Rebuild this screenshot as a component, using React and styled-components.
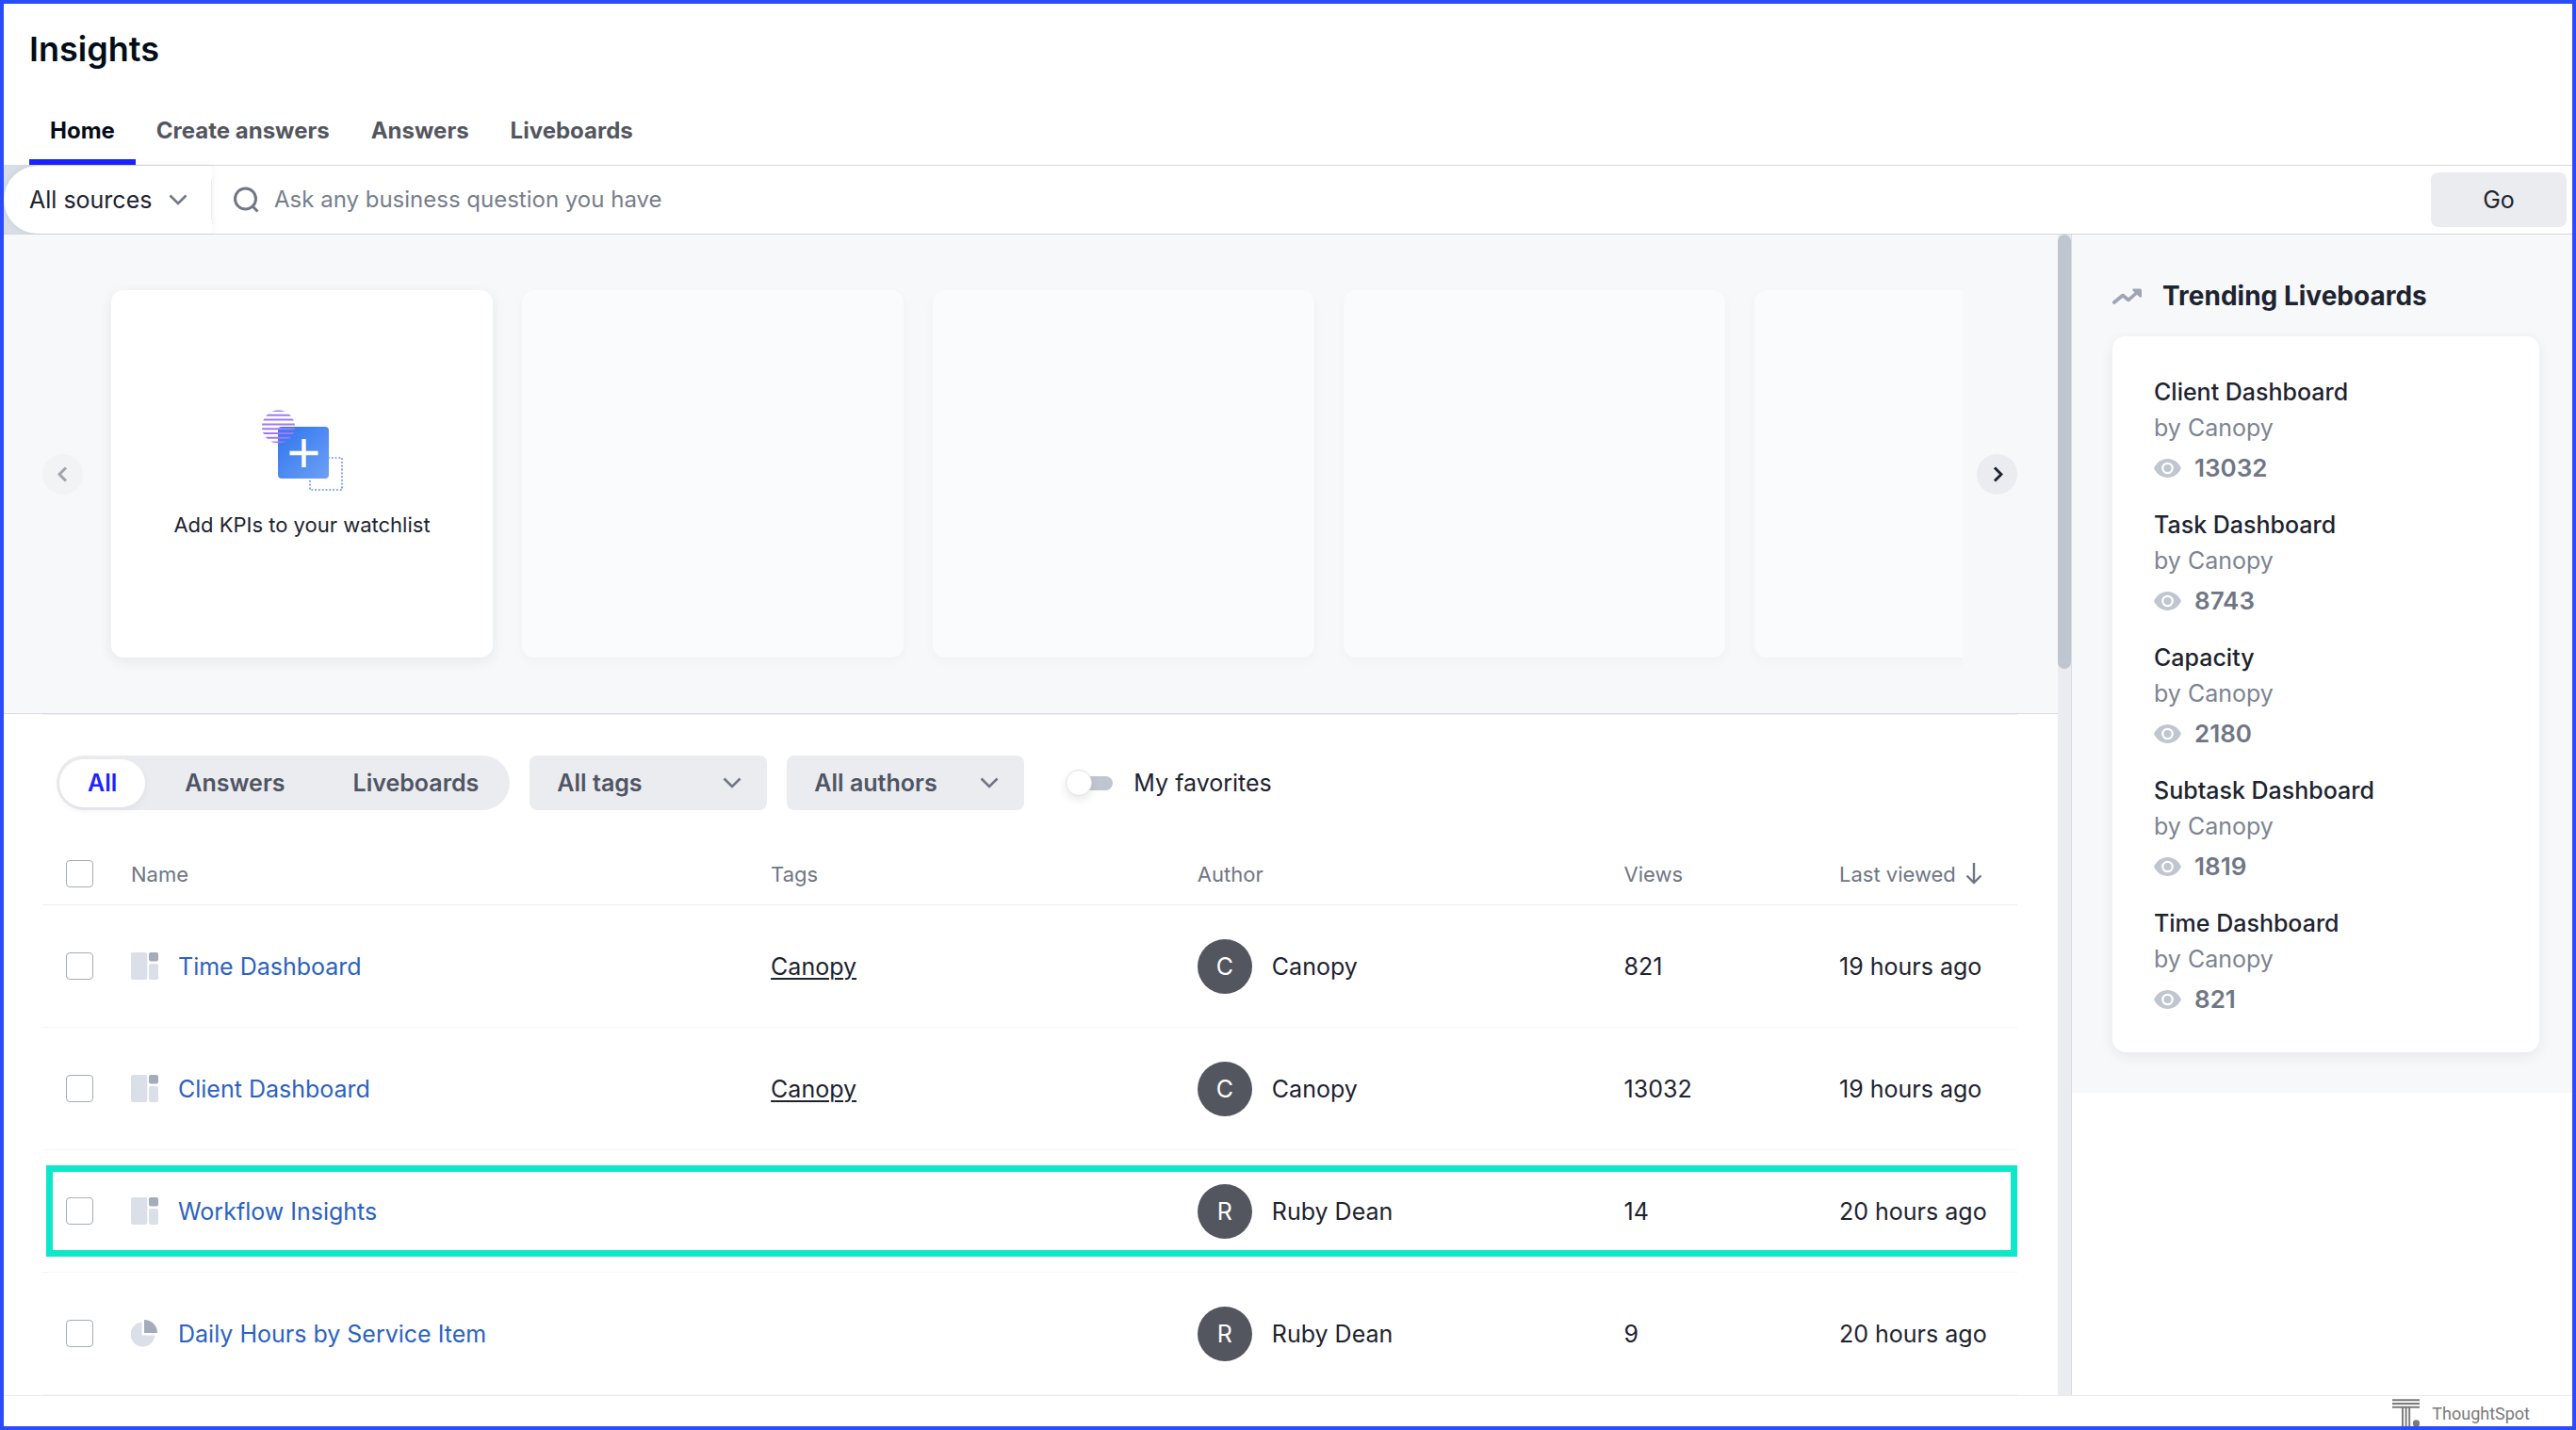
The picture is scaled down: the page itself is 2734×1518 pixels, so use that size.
import React from 'react';
import styled, { createGlobalStyle } from 'styled-components';

const GlobalStyle = createGlobalStyle`
  *, *::before, *::after { box-sizing: border-box; }
  body {
    margin: 0;
    background: #fff;
    color: #1d232f;
    font-family: Inter, "Liberation Sans", sans-serif;
    font-size: 25px;
    line-height: 38px;
  }
  button, input, select { font: inherit; color: inherit; }
  h1, h2, h3, p, ul { margin: 0; padding: 0; }
  ul { list-style: none; }
  a { color: inherit; text-decoration: none; }
`;

const Frame = styled.div`
  display: flex;
  flex-direction: column;
  min-height: 100vh;
  border: 4px solid #2b4bff;
`;

const Header = styled.header`
  border-bottom: 1px solid #d8dade;
`;

const Title = styled.h1`
  padding: 26px 27px 0;
  font-size: 36px;
  line-height: 44px;
  font-weight: 600;
  color: #030d18;
`;

const Tabs = styled.nav`
  display: flex;
  padding: 36px 27px 0;
`;

const Tab = styled.a`
  padding: 13px 22px 14px;
  border-bottom: 6px solid ${(p) => (p.$active ? '#1c23ff' : 'transparent')};
  color: ${(p) => (p.$active ? '#030d18' : '#53565e')};
  font-size: 24px;
  line-height: 32px;
  font-weight: 700;
`;

const SearchBar = styled.form`
  display: flex;
  align-items: center;
  height: 73px;
  border-bottom: 1px solid #d3d6dc;
`;

const SourceWell = styled.div`
  align-self: stretch;
  background: #d9dde6;
`;

const SourcePill = styled.div`
  height: 100%;
  border-radius: 36px 0 0 36px;
  background: #fff;
  box-shadow: 0 0 6px rgba(29, 35, 47, 0.08);
  display: flex;
  align-items: center;
`;

const SelectBox = styled.div`
  display: grid;
  align-items: center;
  width: ${(p) => p.$width};
  height: ${(p) => (p.$filled ? 58 : 44)}px;
  border-radius: ${(p) => (p.$filled ? 8 : 0)}px;
  background: ${(p) => (p.$filled ? '#ebecf0' : 'transparent')};
  color: ${(p) => (p.$filled ? '#4f5563' : '#1d232f')};
  font-weight: ${(p) => (p.$filled ? 600 : 400)};
  border-right: ${(p) => (p.$filled ? 0 : '1px solid #ebecf0')};

  > * { grid-area: 1 / 1; }
  > svg { justify-self: end; margin-right: ${(p) => (p.$filled ? 27 : 25)}px; pointer-events: none; }
`;

const Select = styled.select`
  appearance: none;
  width: 100%;
  height: 100%;
  border: 0;
  padding: 0 27px 0 ${(p) => p.$indent};
  background: transparent;
  cursor: pointer;
`;

const SearchLabel = styled.label`
  display: flex;
  flex: 1;
  align-items: center;
  gap: 16px;
  padding: 0 22px;
`;

const SearchInput = styled.input`
  flex: 1;
  border: 0;
  padding: 0;
  outline: 0;
  background: transparent;
  font-size: 24px;
  &::placeholder { color: #777e8b; opacity: 1; }
`;

const GoButton = styled.button`
  width: 144px;
  height: 58px;
  margin-right: 6px;
  border: 0;
  border-radius: 8px;
  background: #ebecf0;
`;

const Body = styled.div`
  display: flex;
  flex: 1;
`;

const Main = styled.main`
  flex: 1;
  min-width: 0;
`;

const ScrollTrack = styled.div`
  width: 15px;
  flex: none;
  border-right: 1px solid #d9dbe3;
  background: #ebecf0;
`;

const ScrollThumb = styled.div`
  height: 37.4%;
  border-radius: 7px;
  background: #c0c6d0;
`;

const Watchlist = styled.section`
  display: flex;
  align-items: center;
  padding: 45px 43px 45px 41px;
  border-bottom: 1px solid #d8dce3;
  background: #f7f8fa;
`;

const RoundButton = styled.button`
  display: flex;
  flex: none;
  align-items: center;
  justify-content: center;
  width: 43px;
  height: 43px;
  padding: 0;
  border: 0;
  border-radius: 50%;
  background: #ebecf0;
  color: #1d232f;
  &:disabled { background: #f2f3f5; color: #a0a3aa; }
`;

const Track = styled.div`
  display: flex;
  flex: 1;
  min-width: 0;
  gap: 31px;
  overflow: hidden;
  margin-right: 15px;
  padding: 14px 0 14px 30px;
`;

const cardShadow = '0 4px 14px rgba(29, 35, 47, 0.08)';

const KpiCard = styled.div`
  display: flex;
  flex: none;
  flex-direction: column;
  align-items: center;
  width: 405px;
  height: 390px;
  padding-top: 127px;
  border: 0;
  border-radius: 13px;
  background: ${(p) => (p.$empty ? '#fafbfd' : '#fff')};
  box-shadow: ${(p) => (p.$empty ? '0 4px 12px rgba(29, 35, 47, 0.03)' : cardShadow)};
  font-size: 22px;
  line-height: 32px;

  > svg { margin-bottom: 20px; }
`;

const Library = styled.section`
  margin: 0 43px 0 41px;
  border-top: 1px solid #eeeff2;
`;

const Filters = styled.div`
  display: flex;
  align-items: center;
  padding: 43px 15px 0;
  gap: 21px;
`;

const Segmented = styled.div`
  display: flex;
  align-items: center;
  gap: 12px;
  height: 58px;
  padding: 0 3px;
  border-radius: 29px;
  background: #ebecf0;
`;

const Segment = styled.button`
  height: 51px;
  padding: 0 30px;
  border: 0;
  border-radius: 26px;
  background: ${(p) => (p.$active ? '#fff' : 'transparent')};
  box-shadow: ${(p) => (p.$active ? '0 3px 8px rgba(29, 35, 47, 0.06)' : 'none')};
  color: ${(p) => (p.$active ? '#1c23ff' : '#4f5563')};
  font-weight: 600;
`;

const Favorites = styled.label`
  display: flex;
  align-items: center;
  gap: 22px;
  margin-left: 23px;
`;

const Switch = styled.input`
  appearance: none;
  display: flex;
  align-items: center;
  width: 50px;
  height: 28px;
  margin: 0;

  &::before {
    content: '';
    flex: none;
    z-index: 1;
    width: 28px;
    height: 28px;
    border: 1px solid #dfe1e9;
    border-radius: 50%;
    background: #fff;
    box-shadow: 0 4px 8px rgba(29, 35, 47, 0.1);
  }

  &::after {
    content: '';
    flex: 1;
    height: 15px;
    margin-left: -14px;
    border-radius: 8px;
    background: #c0c6d0;
  }
`;

const Table = styled.table`
  width: 100%;
  margin-top: 32px;
  table-layout: fixed;
  border-collapse: separate;
  border-spacing: 0;

  th, td { padding: 0; text-align: left; vertical-align: middle; }
  th {
    height: 69px;
    padding-top: 3px;
    border-bottom: 1px solid #ebecf0;
    color: #6f7684;
    font-size: 22px;
    font-weight: 400;
  }
  td { height: 130px; border-bottom: 1px solid #f4f5f7; }
`;

const Col = styled.col`
  width: ${(p) => p.$width};
`;

const Row = styled.tr`
  position: relative;
`;

const Highlight = styled.div`
  position: absolute;
  top: 16px;
  right: 0;
  bottom: 17px;
  left: 4px;
  border: 7px solid #0ce8c9;
  pointer-events: none;
`;

const Check = styled.input`
  appearance: none;
  display: block;
  width: 29px;
  height: 29px;
  margin: 0 0 0 25px;
  border: 1px solid #a5acb9;
  border-radius: 4px;
  background: #fff;
`;

const Inline = styled.div`
  display: flex;
  align-items: center;
  gap: ${(p) => p.$gap}px;
`;

const NameLink = styled.a`
  color: #2c62bf;
`;

const TagLink = styled.a`
  text-decoration: underline;
  text-decoration-thickness: 2px;
  text-underline-offset: 3px;
`;

const Avatar = styled.span`
  display: flex;
  align-items: center;
  justify-content: center;
  width: 58px;
  height: 58px;
  border-radius: 50%;
  background: #53565e;
  color: #fff;
`;

const Side = styled.aside`
  align-self: flex-start;
  width: 531px;
  padding: 45px 35px 43px 43px;
  background: #f7f8fa;
`;

const SideTitle = styled.h2`
  display: flex;
  align-items: center;
  gap: 22px;
  margin-bottom: 23px;
  font-size: 28px;
  line-height: 40px;
  font-weight: 700;
`;

const TrendList = styled.ul`
  display: flex;
  flex-direction: column;
  gap: 22px;
  padding: 40px 44px 37px;
  border-radius: 14px;
  background: #fff;
  box-shadow: ${cardShadow};
`;

const TrendName = styled.h3`
  font-size: 25px;
  line-height: 38px;
  font-weight: 500;
`;

const TrendBy = styled.p`
  color: #7c8491;
`;

const TrendViews = styled.p`
  display: flex;
  align-items: center;
  gap: 14px;
  padding-top: 5px;
  color: #6f7684;
  font-size: 26px;
  font-weight: 600;
`;

const Footer = styled.footer`
  display: flex;
  align-items: flex-start;
  justify-content: flex-end;
  gap: 13px;
  height: 33px;
  padding: 3px 45px 0;
  overflow: hidden;
  border-top: 1px solid #ebecf0;
  color: #7a7a7a;
  font-family: Roboto, sans-serif;
  font-size: 18px;
  line-height: 32px;
`;

const ChevronDown = () => (
  <svg width="20" height="12" viewBox="0 0 20 12" fill="none" stroke="#6f7684" strokeWidth="2.6" aria-hidden="true">
    <path d="M1.5 1.5 10 10l8.5-8.5" />
  </svg>
);

const Chevron = ({ back }) => (
  <svg width="12" height="17" viewBox="0 0 12 17" fill="none" stroke="currentColor" strokeWidth="3" aria-hidden="true">
    <path d={back ? 'M9 1.5l-7 7 7 7' : 'M3 1.5l7 7-7 7'} />
  </svg>
);

const SearchIcon = () => (
  <svg width="28" height="28" viewBox="0 0 28 28" fill="none" stroke="#6f7684" strokeWidth="3" aria-hidden="true">
    <circle cx="13.500" cy="13" r="11" />
    <path d="m20.500 20.500 6 6" />
  </svg>
);

const AddKpiIcon = () => (
  <svg width="86" height="86" viewBox="0 0 86 86" aria-hidden="true">
    <defs>
      <linearGradient id="kpiBlue" x1="0" y1="0" x2="1" y2="1">
        <stop offset="0.2" stopColor="#3a7df0" />
        <stop offset="1" stopColor="#6ea0f6" />
      </linearGradient>
      <clipPath id="kpiDisc"><circle cx="17.500" cy="18" r="17.500" /></clipPath>
    </defs>
    <path d="M51 51h34v34H51z" fill="none" stroke="#5b8ef0" strokeWidth="1.600" strokeDasharray="1.800 2" />
    <rect x="17" y="18" width="54" height="55" rx="4" fill="url(#kpiBlue)" />
    <g clipPath="url(#kpiDisc)" stroke="#a078f3" strokeWidth="2">
      {[1, 5.8, 10.6, 15.4, 20.2, 25, 29.8, 34.4].map((y) => (
        <path key={y} d={`M0 ${y}h36`} />
      ))}
    </g>
    <path d="M44.500 31v30M29.500 46h30" stroke="#fff" strokeWidth="4.400" />
  </svg>
);

const BoardIcon = () => (
  <svg width="29" height="29" viewBox="0 0 29 29" aria-hidden="true">
    <rect width="17.300" height="29" rx="2" fill="#dbdfe8" />
    <rect x="19" y="0" width="10" height="9.500" rx="2" fill="#a5acb9" />
    <rect x="19" y="12" width="10" height="17" rx="2" fill="#dbdfe8" />
  </svg>
);

const PieIcon = () => (
  <svg width="29" height="29" viewBox="0 0 29 29" aria-hidden="true">
    <path d="M11.500 2.500A13 13 0 1 0 25.500 16.500H11.500z" fill="#dbdfe8" />
    <path d="M14 0a14 14 0 0 1 14 14H14z" fill="#a5acb9" />
  </svg>
);

const TrendIcon = () => (
  <svg width="31" height="17" viewBox="0 0 31 17" fill="none" aria-hidden="true">
    <path d="M1.800 15 11 7.500l6 5L26 4.500" stroke="#9ea3b8" strokeWidth="3.600" strokeLinecap="round" strokeLinejoin="round" />
    <path d="M22 .5h7.500Q31 .5 31 2v7.500h-2L21 2z" fill="#9ea3b8" />
  </svg>
);

const EyeIcon = () => (
  <svg width="29" height="20" viewBox="0 0 29 20" aria-hidden="true">
    <path d="M0 10C3 3.500 8.500 0 14.500 0S26 3.500 29 10C26 16.500 20.500 20 14.500 20S3 16.500 0 10z" fill="#c0c6d0" />
    <circle cx="14.500" cy="10" r="5.200" fill="#c0c6d0" stroke="#fff" strokeWidth="2.200" />
  </svg>
);

const SortIcon = () => (
  <svg width="18" height="23" viewBox="0 0 18 23" fill="none" stroke="#6f7684" strokeWidth="2.400" aria-hidden="true">
    <path d="M9 0v21M1.500 13.500 9 21l7.500-7.500" />
  </svg>
);

const LogoIcon = () => (
  <svg width="29" height="30" viewBox="0 0 29 30" aria-hidden="true">
    <path d="M0 1.200h29M0 5h29M0 8.800h29M11 9v21M14.600 9v21M18.200 9v21" stroke="#7a7a7a" strokeWidth="1.900" />
    <circle cx="25.500" cy="26" r="3.700" fill="#7a7a7a" />
  </svg>
);

const TABS = ['Home', 'Create answers', 'Answers', 'Liveboards'];

const ROWS = [
  { name: 'Time Dashboard', Icon: BoardIcon, tag: 'Canopy', author: 'Canopy', views: 821, seen: '19 hours ago' },
  { name: 'Client Dashboard', Icon: BoardIcon, tag: 'Canopy', author: 'Canopy', views: 13032, seen: '19 hours ago' },
  { name: 'Workflow Insights', Icon: BoardIcon, author: 'Ruby Dean', views: 14, seen: '20 hours ago', highlighted: true },
  { name: 'Daily Hours by Service Item', Icon: PieIcon, author: 'Ruby Dean', views: 9, seen: '20 hours ago' },
];

const TRENDING = [
  ['Client Dashboard', 13032],
  ['Task Dashboard', 8743],
  ['Capacity', 2180],
  ['Subtask Dashboard', 1819],
  ['Time Dashboard', 821],
];

export default function App() {
  return (
    <Frame>
      <GlobalStyle />
      <Header>
        <Title>Insights</Title>
        <Tabs>
          {TABS.map((tab, i) => (
            <Tab key={tab} href="#" $active={i === 0}>{tab}</Tab>
          ))}
        </Tabs>
      </Header>
      <SearchBar onSubmit={(e) => e.preventDefault()}>
        <SourceWell>
          <SourcePill>
            <SelectBox $width="221px">
              <Select aria-label="Data source" $indent="27px">
                <option>All sources</option>
              </Select>
              <ChevronDown />
            </SelectBox>
          </SourcePill>
        </SourceWell>
        <SearchLabel>
          <SearchIcon />
          <SearchInput type="text" aria-label="Search" placeholder="Ask any business question you have" />
        </SearchLabel>
        <GoButton type="submit">Go</GoButton>
      </SearchBar>
      <Body>
        <Main>
          <Watchlist>
            <RoundButton type="button" disabled aria-label="Previous"><Chevron back /></RoundButton>
            <Track>
              <KpiCard>
                <AddKpiIcon />
                Add KPIs to your watchlist
              </KpiCard>
              {[1, 2, 3, 4].map((n) => <KpiCard key={n} $empty />)}
            </Track>
            <RoundButton type="button" aria-label="Next"><Chevron /></RoundButton>
          </Watchlist>
          <Library>
            <Filters>
              <Segmented>
                <Segment type="button" $active>All</Segment>
                <Segment type="button">Answers</Segment>
                <Segment type="button">Liveboards</Segment>
              </Segmented>
              <SelectBox $filled $width="252px">
                <Select aria-label="Tags" $indent="29px"><option>All tags</option></Select>
                <ChevronDown />
              </SelectBox>
              <SelectBox $filled $width="252px">
                <Select aria-label="Authors" $indent="29px"><option>All authors</option></Select>
                <ChevronDown />
              </SelectBox>
              <Favorites>
                <Switch type="checkbox" />
                My favorites
              </Favorites>
            </Filters>
            <Table>
              <colgroup>
                <Col $width="94px" />
                <Col $width="32.4%" />
                <Col $width="21.6%" />
                <Col $width="21.6%" />
                <Col $width="10.9%" />
                <Col $width="auto" />
              </colgroup>
              <thead>
                <tr>
                  <th><Check type="checkbox" aria-label="Select all" /></th>
                  <th>Name</th>
                  <th>Tags</th>
                  <th>Author</th>
                  <th>Views</th>
                  <th><Inline $gap={10}>Last viewed <SortIcon /></Inline></th>
                </tr>
              </thead>
              <tbody>
                {ROWS.map(({ name, Icon, tag, author, views, seen, highlighted }) => (
                  <Row key={name}>
                    <td>
                      <Check type="checkbox" aria-label={`Select ${name}`} />
                      {highlighted && <Highlight />}
                    </td>
                    <td><Inline $gap={21}><Icon /><NameLink href="#">{name}</NameLink></Inline></td>
                    <td>{tag && <TagLink href="#">{tag}</TagLink>}</td>
                    <td><Inline $gap={21}><Avatar>{author[0]}</Avatar>{author}</Inline></td>
                    <td>{views}</td>
                    <td>{seen}</td>
                  </Row>
                ))}
              </tbody>
            </Table>
          </Library>
        </Main>
        <ScrollTrack><ScrollThumb /></ScrollTrack>
        <Side>
          <SideTitle><TrendIcon />Trending Liveboards</SideTitle>
          <TrendList>
            {TRENDING.map(([name, views]) => (
              <li key={name}>
                <TrendName>{name}</TrendName>
                <TrendBy>by Canopy</TrendBy>
                <TrendViews><EyeIcon />{views}</TrendViews>
              </li>
            ))}
          </TrendList>
        </Side>
      </Body>
      <Footer><LogoIcon />ThoughtSpot</Footer>
    </Frame>
  );
}
